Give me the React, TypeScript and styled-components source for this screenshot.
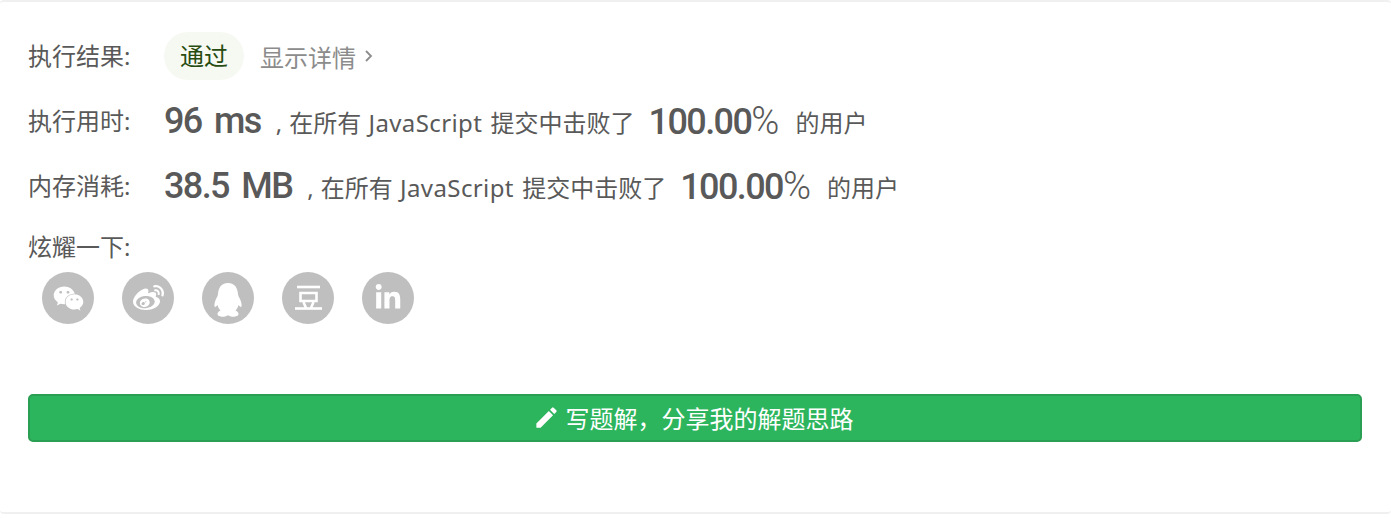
import React from "react";
import styled, { createGlobalStyle } from "styled-components";
import { FaWeixin, FaWeibo, FaLinkedinIn } from "react-icons/fa";
import { MdEdit } from "react-icons/md";

const GlobalStyle = createGlobalStyle`
  html, body {
    margin: 0;
    padding: 0;
    background: #fff;
  }
  body {
    font-family: "Noto Sans", "Noto Sans CJK SC", sans-serif;
    color: #595959;
  }
`;

const Card = styled.div`
  box-sizing: border-box;
  height: 514px;
  padding: 30px 29px 0 28px;
  border-top: 2px solid #f0f0f0;
  border-bottom: 2px solid #f0f0f0;
  border-radius: 4px;
`;

const Row = styled.div`
  display: flex;
  align-items: center;
  height: 48px;
  margin-bottom: 17px;
  white-space: nowrap;
`;

const Label = styled.div`
  width: 136px;
  font-size: 24px;
  line-height: 48px;
`;

const Pill = styled.span`
  width: 80px;
  height: 48px;
  border-radius: 24px;
  background: #f6f9f2;
  color: #274b11;
  font-size: 24px;
  line-height: 48px;
  text-align: center;
`;

const Details = styled.span`
  display: flex;
  align-items: center;
  gap: 8px;
  margin-left: 16px;
  color: #8c8c8c;
  font-size: 24px;
`;

const Big = styled.span`
  font-family: "Roboto", sans-serif;
  font-size: 36px;
  font-weight: 500;
  letter-spacing: -1.6px;
  word-spacing: 5px;
`;

const Percent = styled(Big)`
  margin: 0 16px 0 14px;
`;

const Thin = styled.span`
  font-size: 38px;
  font-weight: 300;
  letter-spacing: 0;
`;

const Plain = styled.span`
  font-size: 24px;
  margin-left: 15px;
`;

const Comma = styled.span`
  margin-right: 7px;
`;

const Latin = styled.span`
  letter-spacing: 0.4px;
  margin: 0 2px 0 1px;
`;

const Tail = styled.span`
  font-size: 24px;
`;

const ShareLabel = styled.div`
  font-size: 24px;
  line-height: 32px;
  margin-top: 21px;
`;

const Shares = styled.div`
  display: flex;
  gap: 28px;
  margin: 9px 0 0 14px;
`;

const ShareBtn = styled.a<{ $size?: number }>`
  display: flex;
  align-items: center;
  justify-content: center;
  width: 52px;
  height: 52px;
  border-radius: 50%;
  background: #bfbfbf;
  color: #fff;
  font-size: ${(p) => p.$size ?? 30}px;
`;

const WriteBtn = styled.button`
  display: flex;
  align-items: center;
  justify-content: center;
  gap: 6px;
  box-sizing: border-box;
  width: 100%;
  height: 48px;
  margin-top: 70px;
  padding: 0 4px 2px 0;
  background: #2db55d;
  border: 2px solid #2a9e53;
  border-radius: 5px;
  color: #fff;
  font-family: "Noto Sans", "Noto Sans CJK SC", sans-serif;
  font-size: 24px;
`;

const QqIcon = () => (
  <svg width="52" height="52" viewBox="0 0 52 52" fill="#fff">
    <path d="M26 11C19 11 16.500 16 16 22C15.800 24 15 25 14.500 26C13 29 12 32 12.500 34.500C13 35.500 14.500 34.500 15.500 33C16 35 17 37 18.500 38.500C16.500 39.500 15.500 40.500 15.500 42C15.500 44.500 20 45 23 44.500C24.500 44 25 43.500 26 43.500C27 43.500 27.500 44 29 44.500C32 45 36.500 44.500 36.500 42C36.500 40.500 35.500 39.500 33.500 38.500C35 37 36 35 36.500 33C37.500 34.500 39 35.500 39.500 34.500C40 32 39 29 37.500 26C37 25 36.200 24 36 22C35.500 16 33 11 26 11Z" />
  </svg>
);

const DoubanIcon = () => (
  <svg width="52" height="52" viewBox="0 0 52 52" fill="none" stroke="#fff" strokeWidth="2.600">
    <path d="M15 15H38" />
    <path d="M18.500 21H34.500V29H18.500Z" />
    <path d="M21.500 30L24 36M31.500 30L29 36" />
    <path d="M13 36.500H40" />
  </svg>
);

const Stat = ({ label, big, rest }: { label: string; big: string; rest: string }) => (
  <Row>
    <Label>{label}</Label>
    <Big>{big}</Big>
    <Plain>
      <Comma>,</Comma>在所有 <Latin>JavaScript</Latin> 提交中击败了
    </Plain>
    <Percent>
      100.00<Thin>%</Thin>
    </Percent>
    <Tail>{rest}</Tail>
  </Row>
);

export default function App() {
  return (
    <>
      <GlobalStyle />
      <Card>
        <Row>
          <Label>执行结果:</Label>
          <Pill>通过</Pill>
          <Details>
            显示详情
            <svg width="10" height="16" viewBox="0 0 10 16" fill="none" stroke="#8c8c8c" strokeWidth="1.8">
              <path d="M2 3l5 5-5 5" />
            </svg>
          </Details>
        </Row>
        <Stat label="执行用时:" big="96 ms" rest="的用户" />
        <Stat label="内存消耗:" big="38.5 MB" rest="的用户" />
        <ShareLabel>炫耀一下:</ShareLabel>
        <Shares>
          <ShareBtn $size={31}><FaWeixin /></ShareBtn>
          <ShareBtn $size={31}><FaWeibo /></ShareBtn>
          <ShareBtn><QqIcon /></ShareBtn>
          <ShareBtn><DoubanIcon /></ShareBtn>
          <ShareBtn $size={28}><FaLinkedinIn /></ShareBtn>
        </Shares>
        <WriteBtn>
          <MdEdit size={27} />
          写题解，分享我的解题思路
        </WriteBtn>
      </Card>
    </>
  );
}
